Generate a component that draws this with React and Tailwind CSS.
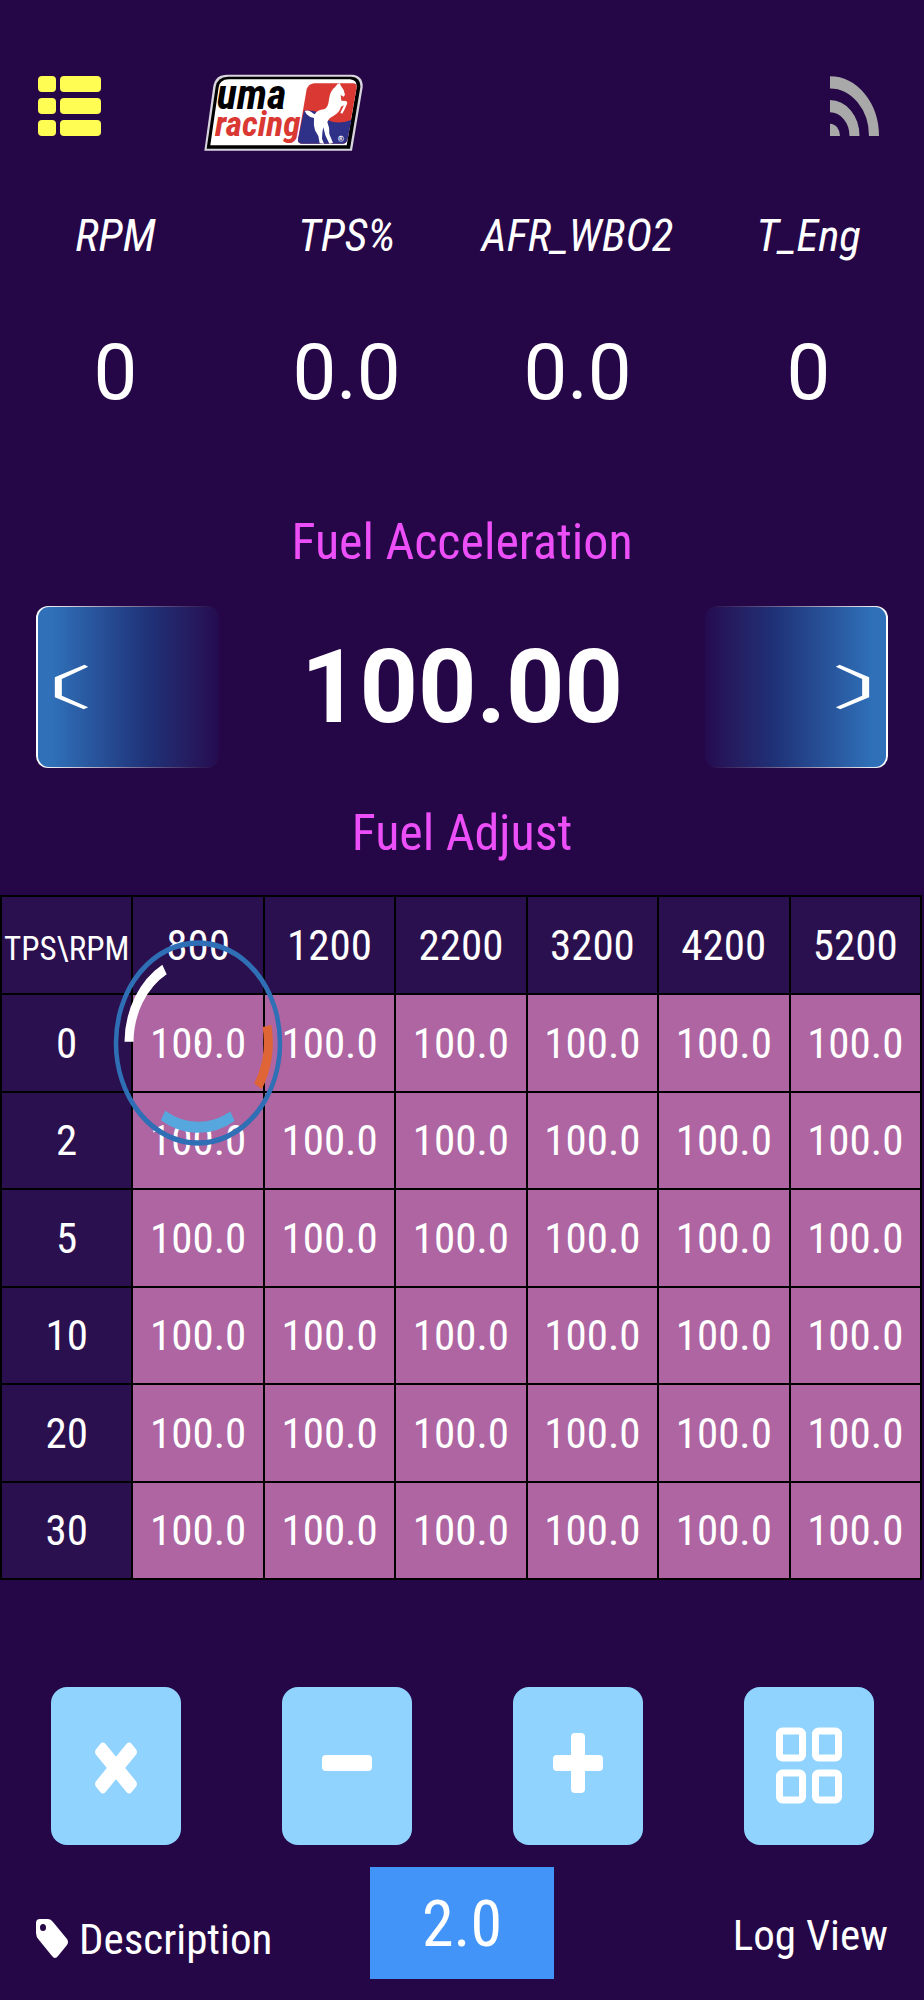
const rpm = [800, 1200, 2200, 3200, 4200, 5200];
const tps = [0, 2, 5, 10, 20, 30];

const readings = [
  { label: 'RPM', value: '0' },
  { label: 'TPS%', value: '0.0' },
  { label: 'AFR_WBO2', value: '0.0' },
  { label: 'T_Eng', value: '0' },
];

function ListIcon() {
  return (
    <svg width="64" height="64" viewBox="0 0 64 64" fill="#fffd54" aria-hidden="true">
      {[2, 24, 46].map((y) => (
        <g key={y}>
          <rect x="0" y={y} width="18" height="16" rx="4" />
          <rect x="22" y={y} width="41" height="16" rx="4" />
        </g>
      ))}
    </svg>
  );
}

function Logo() {
  return (
    <svg className="overflow-visible" width="160" height="78" viewBox="42 40 480 234" role="img" aria-label="uma racing">
      <path d="M43 270 L70 76 Q76 42 112 42 H486 Q520 44 518 80 L486 270 Z" fill="#d8d4dd" />
      <path d="M50 264 L77 78 Q82 49 114 48 H484 Q513 50 511 80 L480 264 Z" fill="#000" />
      <path d="M61 254 L86 80 Q89 57 116 56 H480 Q502 58 500 80 L470 254 Z" fill="#fff" />
      <path d="M372 68 H490 Q501 69 500 80 L472 238 Q469 249 458 249 H335 Q322 248 324 236 L350 86 Q355 70 372 68 Z" fill="#da3832" />
      <path d="M342 150 Q376 148 390 160 Q425 200 484 178 L472 238 Q469 249 458 249 H335 Q322 248 324 236 Z" fill="#2e3187" />
      <g transform="translate(312 54)">
        <path
          d="M32 97 Q44 93 53 101 Q58 106 62 107 Q70 94 90 92 Q103 88 105 62 Q108 36 124 24 L130 17 L137 13 L141 22 L149 34 L153 48 L149 54 L140 49 L142 66 L157 67 L160 74 L152 92 L145 105 L139 102 L150 80 L141 84 Q136 102 118 112 Q104 118 100 130 Q107 146 106 166 L117 193 L106 195 L94 170 L88 146 Q84 160 84 180 L90 195 L77 194 L73 172 L63 155 Q58 140 60 118 Q46 116 38 107 Z"
          fill="#fff"
        />
        <circle cx="141" cy="180" r="8" fill="none" stroke="#fff" strokeWidth="2" />
        <text x="136" y="185" fill="#fff" fontFamily="Roboto, sans-serif" fontSize="14" fontWeight="700">R</text>
      </g>
      <text x="80" y="144" fill="#000" fontFamily="'Roboto Condensed', sans-serif" fontStyle="italic" fontWeight="700" fontSize="126">uma</text>
      <text x="75" y="225" fill="#da3832" fontFamily="'Roboto Condensed', sans-serif" fontStyle="italic" fontWeight="700" fontSize="106">racing</text>
    </svg>
  );
}

function SignalIcon() {
  return (
    <svg width="50" height="64" viewBox="0 0 50 64" aria-hidden="true">
      <g fill="none" stroke="#a9a9a9" strokeWidth="10" transform="translate(0 62) scale(1 1.22)">
        <path d="M0 -44 A44 44 0 0 1 44 0" />
        <path d="M0 -24.500 A24.500 24.500 0 0 1 24.500 0" />
        <path d="M0 -5 A5 5 0 0 1 5 0" />
      </g>
    </svg>
  );
}

function Chevron({ flip }) {
  return (
    <svg width="35" height="46" viewBox="0 0 104 138" fill="#fff" aria-hidden="true">
      <path
        transform={flip ? 'translate(104 0) scale(-1 1)' : undefined}
        d="M91 2 L102 8 L23 45 V95 L102 130 L89 136 L2 100 V40 Z"
      />
    </svg>
  );
}

function Spinner() {
  return (
    <svg
      className="pointer-events-none absolute top-1/2 left-1/2 -translate-1/2"
      width="176"
      height="212"
      viewBox="-88 -106 176 212"
      aria-hidden="true"
    >
      <g fill="none" transform="scale(1 1.22)">
        <circle r="82" stroke="#2f6fb5" strokeWidth="4.500" />
        <path d="M-69 -1 A69 69 0 0 1 -33.500 -60.300" stroke="#fff" strokeWidth="9" />
        <path d="M69 -14 A70 70 0 0 1 60 35.500" stroke="#df6536" strokeWidth="9" />
        <path d="M34.500 60 A69 69 0 0 1 -35 59.500" stroke="#55a7dd" strokeWidth="9" />
        <circle r="2.500" fill="#fff" />
      </g>
    </svg>
  );
}

function XIcon() {
  return (
    <svg width="50" height="60" viewBox="-25 -32 50 60" fill="#fff" aria-hidden="true">
      <g transform="scale(1 1.22)">
        <rect x="-25" y="-6.500" width="50" height="13" rx="3.500" transform="rotate(45)" />
        <rect x="-25" y="-6.500" width="50" height="13" rx="3.500" transform="rotate(-45)" />
      </g>
    </svg>
  );
}

function MinusIcon() {
  return (
    <svg width="50" height="66" viewBox="-25 -30 50 66" fill="#fff" aria-hidden="true">
      <rect x="-25" y="-8" width="50" height="16" rx="4" />
    </svg>
  );
}

function PlusIcon() {
  return (
    <svg width="50" height="66" viewBox="-25 -30 50 66" fill="#fff" aria-hidden="true">
      <rect x="-25" y="-8" width="50" height="16" rx="4" />
      <rect x="-7" y="-30" width="14" height="60" rx="4" />
    </svg>
  );
}

function GridIcon() {
  return (
    <svg width="66" height="78" viewBox="0 0 66 78" fill="none" stroke="#fff" strokeWidth="7" aria-hidden="true">
      <rect x="3.500" y="4" width="23" height="27" rx="3" />
      <rect x="39.500" y="4" width="23" height="27" rx="3" />
      <rect x="3.500" y="46" width="23" height="27" rx="3" />
      <rect x="39.500" y="46" width="23" height="27" rx="3" />
    </svg>
  );
}

function TagIcon() {
  return (
    <svg width="33" height="40" viewBox="0 0 33 40" fill="#fff" aria-hidden="true">
      <path
        fillRule="evenodd"
        d="M4 0 H12 Q15 0 17 3 L31 20 Q33 23 31 26 L22 37 Q19 41 16 37 L3 21 Q0 18 0 14 V4 Q0 0 4 0 Z M7 5 A3 3.500 0 0 0 7 12 A3 3.500 0 0 0 7 5 Z"
      />
    </svg>
  );
}

const actions = [
  { label: 'Reset', Icon: XIcon },
  { label: 'Decrease', Icon: MinusIcon },
  { label: 'Increase', Icon: PlusIcon },
  { label: 'Grid', Icon: GridIcon },
];

export default function App() {
  return (
    <main className="flex min-h-screen flex-col bg-[#250647] font-['Roboto_Condensed','Roboto',sans-serif] text-white">
      <header className="flex items-start pt-[74px] pr-11 pl-[38px]">
        <button type="button" aria-label="Menu">
          <ListIcon />
        </button>
        <div className="ml-[102px]">
          <Logo />
        </div>
        <button type="button" aria-label="Connection" className="ml-auto">
          <SignalIcon />
        </button>
      </header>

      <dl className="mt-[54px] grid grid-cols-4 text-center">
        {readings.map(({ label, value }) => (
          <div key={label}>
            <dt className="text-[45px] leading-[60px] italic">{label}</dt>
            <dd className="mt-[59px] font-['Roboto',sans-serif] text-[78px] leading-24">{value}</dd>
          </div>
        ))}
      </dl>

      <h1 className="mt-[91px] text-center text-[50px] leading-[60px] text-[#ec4ff7]">Fuel Acceleration</h1>

      <div className="mt-[34px] flex items-center justify-between px-9">
        <button
          type="button"
          aria-label="Previous"
          className="rounded-xl bg-linear-to-r from-white to-[#250647] py-px pl-0.5"
        >
          <span className="flex h-40 w-[181px] items-center rounded-[11px] bg-linear-to-r from-[#2f70b8] from-8% via-[#1f3177] via-62% to-[#250b50] pl-4">
            <Chevron />
          </span>
        </button>
        <output className="font-['Roboto',sans-serif] text-[102px] leading-[120px] font-bold">100.00</output>
        <button
          type="button"
          aria-label="Next"
          className="rounded-xl bg-linear-to-l from-white to-[#250647] py-px pr-0.5"
        >
          <span className="flex h-40 w-[181px] items-center justify-end rounded-[11px] bg-linear-to-l from-[#2f70b8] from-8% via-[#1f3177] via-62% to-[#250b50] pr-4">
            <Chevron flip />
          </span>
        </button>
      </div>

      <h2 className="mt-[35px] text-center text-[50px] leading-[60px] text-[#ec4ff7]">Fuel Adjust</h2>

      <div className="mt-8 pr-0.5">
        <table className="h-[685px] w-full table-fixed border-collapse border-2 border-black text-center text-[43px] leading-[60px]">
          <thead>
            <tr className="h-[98px] bg-[#2b104f]">
              <th scope="col" className="border-2 border-black pt-2 text-[33px] font-normal">
                TPS\RPM
              </th>
              {rpm.map((r) => (
                <th key={r} scope="col" className="border-2 border-black font-normal">
                  {r}
                </th>
              ))}
            </tr>
          </thead>
          <tbody>
            {tps.map((t, row) => (
              <tr key={t}>
                <th scope="row" className="border-2 border-black bg-[#2b104f] font-normal">
                  {t}
                </th>
                {rpm.map((r, col) => (
                  <td key={r} className="border-2 border-black bg-[#ae65a1]">
                    {row === 0 && col === 0 ? (
                      <div className="relative">
                        100.0
                        <Spinner />
                      </div>
                    ) : (
                      '100.0'
                    )}
                  </td>
                ))}
              </tr>
            ))}
          </tbody>
        </table>
      </div>

      <div className="mt-[107px] grid grid-cols-4 justify-items-center">
        {actions.map(({ label, Icon }) => (
          <button
            key={label}
            type="button"
            aria-label={label}
            className="flex h-[158px] w-[130px] items-center justify-center rounded-2xl bg-[#8fd3fe]"
          >
            <Icon />
          </button>
        ))}
      </div>

      <footer className="mt-[22px] mb-5 grid grid-cols-[1fr_auto_1fr] items-center px-9">
        <button type="button" className="flex items-center gap-2.5 pt-8 text-left text-[43px] leading-[60px]">
          <TagIcon />
          Description
        </button>
        <button type="button" className="h-28 w-[184px] bg-[#4394f8] pt-1 text-[64px] leading-[80px]">
          2.0
        </button>
        <a href="#log" className="justify-self-end pt-6 text-[43px] leading-[60px]">
          Log View
        </a>
      </footer>
    </main>
  );
}
